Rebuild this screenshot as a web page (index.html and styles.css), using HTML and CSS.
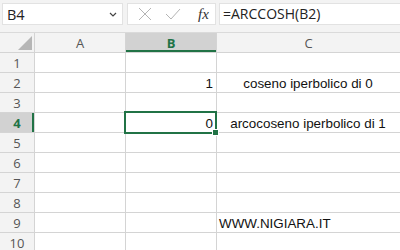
FILE: index.html
```html
<!DOCTYPE html>
<html lang="it">
<head>
  <meta charset="UTF-8">
  <title>ARCCOSH</title>
  <link rel="stylesheet" href="styles.css">
</head>
<body>
  <div class="barra">
    <div class="nome-cella">
      <span>B4</span>
      <svg class="freccia" width="8" height="5" viewBox="0 0 8 5"><path d="M1 1 L4 4 L7 1" fill="none" stroke="#444" stroke-width="1.2"/></svg>
    </div>
    <div class="pulsanti">
      <svg width="14" height="14" viewBox="0 0 14 14"><path d="M1 1 L13 13 M13 1 L1 13" stroke="#b4b4b4" stroke-width="1"/></svg>
      <svg width="16" height="14" viewBox="0 0 16 14"><path d="M1 7 L6 12 L15 2" fill="none" stroke="#b4b4b4" stroke-width="1"/></svg>
      <span class="fx">fx</span>
    </div>
    <div class="formula">=ARCCOSH(B2)</div>
  </div>

  <div class="foglio">
    <div class="angolo"><span class="triangolo"></span></div>
    <div class="intestazione">A</div>
    <div class="intestazione attiva-col">B</div>
    <div class="intestazione">C</div>

    <div class="riga">1</div><div class="cella"></div><div class="cella"></div><div class="cella"></div>
    <div class="riga">2</div><div class="cella"></div><div class="cella destra">1</div><div class="cella centro">coseno iperbolico di 0</div>
    <div class="riga">3</div><div class="cella"></div><div class="cella"></div><div class="cella"></div>
    <div class="riga attiva-riga">4</div><div class="cella"></div><div class="cella destra selezionata">0</div><div class="cella centro">arcocoseno iperbolico di 1</div>
    <div class="riga">5</div><div class="cella"></div><div class="cella"></div><div class="cella"></div>
    <div class="riga">6</div><div class="cella"></div><div class="cella"></div><div class="cella"></div>
    <div class="riga">7</div><div class="cella"></div><div class="cella"></div><div class="cella"></div>
    <div class="riga">8</div><div class="cella"></div><div class="cella"></div><div class="cella"></div>
    <div class="riga">9</div><div class="cella"></div><div class="cella"></div><div class="cella">WWW.NIGIARA.IT</div>
    <div class="riga">10</div><div class="cella"></div><div class="cella"></div><div class="cella"></div>
  </div>
</body>
</html>
```
FILE: styles.css
```css
body {
  margin: 0;
  width: 400px;
  height: 250px;
  overflow: hidden;
  background: #f3f3f3;
  font-family: "Liberation Sans", Arial, sans-serif;
}
.barra {
  display: flex;
  height: 33px;
  padding-top: 3px;
  box-sizing: border-box;
}
.nome-cella {
  margin-left: 2px;
  width: 121px;
  height: 22px;
  box-sizing: border-box;
  background: #fff;
  border: 1px solid #e2e2e2;
  display: flex;
  align-items: center;
  justify-content: space-between;
  padding: 0 5px 0 4px;
  font-family: "Open Sans", sans-serif;
  font-size: 14.5px;
  color: #222;
}
.freccia {
  margin-top: 1px;
}
.pulsanti {
  margin-left: 4px;
  width: 89px;
  height: 22px;
  box-sizing: border-box;
  background: #fff;
  border: 1px solid #e2e2e2;
  display: flex;
  align-items: center;
  padding-left: 10px;
  gap: 13px;
}
.fx {
  font-family: "Liberation Serif", serif;
  font-style: italic;
  font-size: 15px;
  color: #333;
  margin-left: 4px;
}
.formula {
  margin-left: 3px;
  flex: 1;
  height: 22px;
  box-sizing: border-box;
  background: #fff;
  border: 1px solid #e2e2e2;
  border-right: none;
  padding-left: 3px;
  font-family: "Open Sans", sans-serif;
  font-size: 14px;
  line-height: 20px;
  color: #222;
}
.foglio {
  display: grid;
  grid-template-columns: 34px 90px 90px 1fr;
  grid-auto-rows: 19px;
  gap: 1px;
  background: #d4d4d4;
  border-top: 1px solid #dadada;
  margin-top: -1px;
}
.angolo {
  background: #f3f3f3;
  position: relative;
}
.triangolo {
  position: absolute;
  right: 2px;
  bottom: 2px;
  width: 0;
  height: 0;
  border-left: 14px solid transparent;
  border-bottom: 14px solid #b6b6b6;
}
.intestazione, .riga {
  background: #f3f3f3;
  display: flex;
  align-items: center;
  justify-content: center;
  font-family: "Open Sans", sans-serif;
  font-size: 13px;
  color: #555;
}
.attiva-col {
  background: #d2d2d2;
  color: #217346;
  font-weight: bold;
  box-shadow: inset 0 -2px 0 #217346;
}
.attiva-riga {
  background: #d2d2d2;
  color: #217346;
  font-weight: bold;
  box-shadow: inset -2px 0 0 #217346;
}
.cella {
  background: #fff;
  display: flex;
  align-items: flex-end;
  padding: 0 3px 1px 2px;
  font-size: 13.4px;
  color: #111;
  white-space: nowrap;
}
.destra {
  justify-content: flex-end;
}
.centro {
  justify-content: center;
}
.selezionata {
  position: relative;
}
.selezionata::after {
  content: "";
  position: absolute;
  left: -2px;
  top: -2px;
  right: -1px;
  bottom: -2px;
  border: 2px solid #217346;
}
.selezionata::before {
  content: "";
  position: absolute;
  right: -3px;
  bottom: -4px;
  width: 5px;
  height: 5px;
  background: #217346;
  border: 1px solid #fff;
  z-index: 1;
}
```
